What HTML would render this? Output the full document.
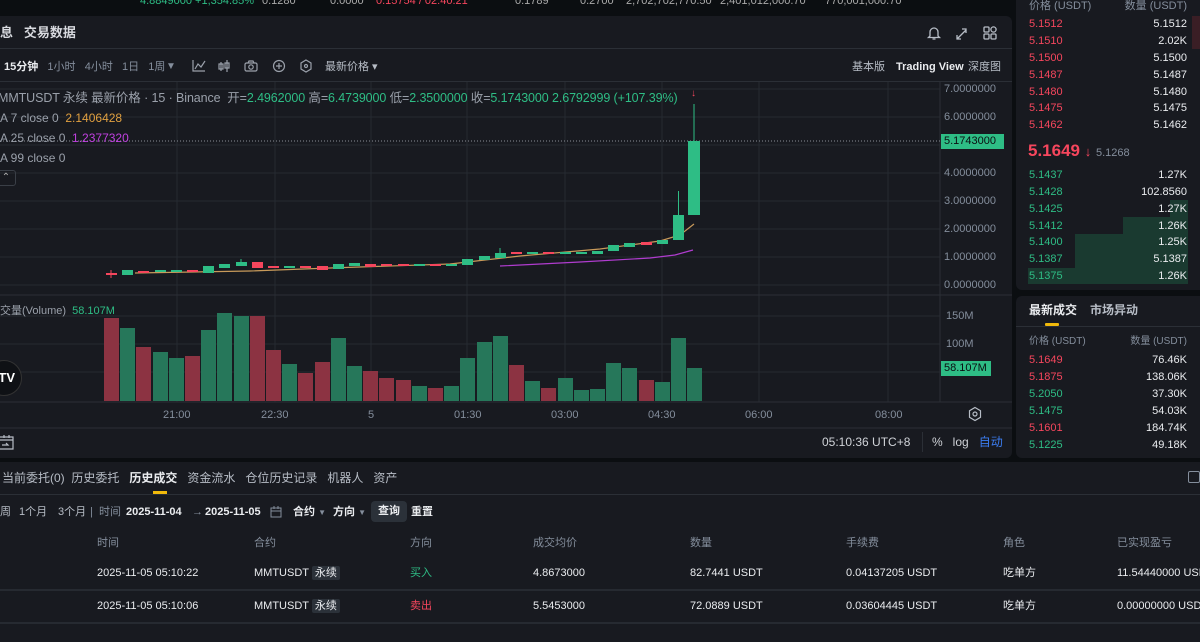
<!DOCTYPE html>
<html><head><meta charset="utf-8"><style>
*{margin:0;padding:0;box-sizing:border-box}
body{width:1200px;height:629px;overflow:hidden;background:#0b0e11;font-family:"Liberation Sans","Noto Sans CJK SC",sans-serif;color:#eaecef;position:relative}
.a{position:absolute;white-space:nowrap;line-height:14px}
.g{color:#2ebd85}.r{color:#f6465d}.m{color:#848e9c}.w{color:#eaecef}
.panel{position:absolute;background:#181a20;border-radius:6px}
.ob div{position:absolute;font-size:11px;line-height:13px}
</style></head><body>
<!-- top bar -->
<div class="a" style="top:-6px;left:140px;font-size:11px;color:#2ebd85">4.8849000 +1,354.85%</div>
<div class="a" style="top:-6px;left:262px;font-size:11px;color:#aaa">0.1280</div>
<div class="a" style="top:-6px;left:330px;font-size:11px;color:#aaa">0.0000</div>
<div class="a r" style="top:-6px;left:376px;font-size:11px">0.15754 / 02:40:21</div>
<div class="a" style="top:-6px;left:515px;font-size:11px;color:#aaa">0.1789</div>
<div class="a" style="top:-6px;left:580px;font-size:11px;color:#aaa">0.2700</div>
<div class="a" style="top:-6px;left:626px;font-size:11px;color:#aaa">2,702,702,770.50</div>
<div class="a" style="top:-6px;left:720px;font-size:11px;color:#aaa">2,401,012,000.70</div>
<div class="a" style="top:-6px;left:825px;font-size:11px;color:#aaa">770,001,000.70</div>

<!-- chart panel -->
<div class="panel" style="left:-6px;top:16px;width:1018px;height:442px;background:#181a20"></div>
<div class="a" style="left:0;top:26px;font-size:13px;font-weight:bold;color:#d8dadf">息&nbsp;&nbsp;&nbsp;交易数据</div>
<svg class="a" style="left:925px;top:24px" width="75" height="18" viewBox="0 0 75 18" fill="none" stroke="#b7bdc6" stroke-width="1.3">
<path d="M5 12V8a4 4 0 0 1 8 0v4l1.5 1.5h-11z M7.5 15h3"/>
<path d="M32 15l9-9 M37 5h4v4 M32 11v4h4"/>
<rect x="59" y="3" width="5" height="5" rx="1"/><rect x="59" y="10" width="5" height="5" rx="1"/><rect x="66" y="10" width="5" height="5" rx="1"/><circle cx="68.5" cy="5.5" r="2.6"/>
</svg>
<div class="a" style="left:0;top:48px;width:1012px;height:1px;background:#2b2f36"></div>
<div class="a" style="left:4px;top:60px;font-size:11px;color:#848e9c"><b style="color:#eaecef">15分钟</b>&nbsp;&nbsp;&nbsp;1小时&nbsp;&nbsp;&nbsp;4小时&nbsp;&nbsp;&nbsp;1日&nbsp;&nbsp;&nbsp;1周</div>
<div class="a m" style="left:166px;top:60px;font-size:10px">▼</div>
<svg class="a" style="left:190px;top:58px" width="125" height="16" fill="none" stroke="#9aa0aa" stroke-width="1.2">
<path d="M3 2v11h12 M5 11l3-5 3 3 4-6"/>
<path d="M31 4v9 M29 6h4v5h-4z M37 2v12 M35 5h4v5h-4z"/>
<rect x="55" y="5" width="12" height="8" rx="1.5"/><circle cx="61" cy="9" r="2.2"/><path d="M58 5l1-2h4l1 2"/>
<circle cx="89" cy="8" r="5.5"/><path d="M89 5v6 M86 8h6"/>
<path d="M116 2l5 3v6l-5 3-5-3V5z"/><circle cx="116" cy="8" r="1.5"/>
</svg>
<div class="a" style="left:325px;top:60px;font-size:11px;color:#b7bdc6">最新价格 ▾</div>
<div class="a" style="left:852px;top:60px;font-size:11px;color:#b7bdc6">基本版</div>
<div class="a" style="left:896px;top:60px;font-size:11px;font-weight:bold;color:#eaecef">Trading View</div>
<div class="a" style="left:968px;top:60px;font-size:11px;color:#b7bdc6">深度图</div>
<div class="a" style="left:0;top:81px;width:1012px;height:1px;background:#2b2f36"></div>

<svg class="a" style="left:0;top:0" width="1012" height="460">
<g stroke="#262a31" stroke-width="1">
<path d="M0 89H940M0 117H940M0 145H940M0 173H940M0 201H940M0 229H940M0 257H940M0 285H940M0 316H940M0 344H940M0 372H940"/>
<path d="M177 82V402M275 82V402M371 82V402M467 82V402M565 82V402M662 82V402M759 82V402M888 82V402"/>
</g>
<path d="M0 295H1012M940 82V402M0 402H1012M0 428H1012" stroke="#2b2f36"/>
<path d="M0 141H940" stroke="#8a8f96" stroke-dasharray="1 2"/>
<g>
<rect x="104" y="318" width="15" height="83" fill="#8c3342"/>
<rect x="120" y="328" width="15" height="73" fill="#26775a"/>
<rect x="136" y="347" width="15" height="54" fill="#8c3342"/>
<rect x="153" y="352" width="15" height="49" fill="#26775a"/>
<rect x="169" y="358" width="15" height="43" fill="#26775a"/>
<rect x="185" y="356" width="15" height="45" fill="#8c3342"/>
<rect x="201" y="330" width="15" height="71" fill="#26775a"/>
<rect x="217" y="313" width="15" height="88" fill="#26775a"/>
<rect x="234" y="316" width="15" height="85" fill="#26775a"/>
<rect x="250" y="316" width="15" height="85" fill="#8c3342"/>
<rect x="266" y="350" width="15" height="51" fill="#8c3342"/>
<rect x="282" y="364" width="15" height="37" fill="#26775a"/>
<rect x="298" y="373" width="15" height="28" fill="#8c3342"/>
<rect x="315" y="362" width="15" height="39" fill="#8c3342"/>
<rect x="331" y="338" width="15" height="63" fill="#26775a"/>
<rect x="347" y="366" width="15" height="35" fill="#26775a"/>
<rect x="363" y="371" width="15" height="30" fill="#8c3342"/>
<rect x="379" y="378" width="15" height="23" fill="#8c3342"/>
<rect x="396" y="380" width="15" height="21" fill="#8c3342"/>
<rect x="412" y="386" width="15" height="15" fill="#26775a"/>
<rect x="428" y="388" width="15" height="13" fill="#8c3342"/>
<rect x="444" y="386" width="15" height="15" fill="#26775a"/>
<rect x="460" y="358" width="15" height="43" fill="#26775a"/>
<rect x="477" y="342" width="15" height="59" fill="#26775a"/>
<rect x="493" y="336" width="15" height="65" fill="#26775a"/>
<rect x="509" y="365" width="15" height="36" fill="#8c3342"/>
<rect x="525" y="381" width="15" height="20" fill="#26775a"/>
<rect x="541" y="388" width="15" height="13" fill="#8c3342"/>
<rect x="558" y="378" width="15" height="23" fill="#26775a"/>
<rect x="574" y="390" width="15" height="11" fill="#26775a"/>
<rect x="590" y="389" width="15" height="12" fill="#26775a"/>
<rect x="606" y="363" width="15" height="38" fill="#26775a"/>
<rect x="622" y="368" width="15" height="33" fill="#26775a"/>
<rect x="639" y="380" width="15" height="21" fill="#8c3342"/>
<rect x="655" y="382" width="15" height="19" fill="#26775a"/>
<rect x="671" y="338" width="15" height="63" fill="#26775a"/>
<rect x="687" y="368" width="15" height="33" fill="#26775a"/>
</g>
<path d="M135 273 L250 271 L330 268 L450 264 L520 256 L600 249 L660 241 L680 235 L694 224" stroke="#c89a5a" stroke-width="1.2" fill="none"/>
<path d="M500 266 L580 262 L650 258 L675 255 L693 250" stroke="#b03ccf" stroke-width="1.2" fill="none"/>
<g>
<rect x="106" y="273" width="11" height="2" fill="#f6465d"/><path d="M111 270V278" stroke="#f6465d"/>
<rect x="122" y="270" width="11" height="5" fill="#2ebd85"/>
<rect x="138" y="271" width="11" height="2" fill="#f6465d"/>
<rect x="155" y="270" width="11" height="2" fill="#2ebd85"/>
<rect x="171" y="270" width="11" height="2" fill="#2ebd85"/>
<rect x="187" y="270" width="11" height="2" fill="#f6465d"/>
<rect x="203" y="266" width="11" height="7" fill="#2ebd85"/>
<rect x="219" y="264" width="11" height="4" fill="#2ebd85"/>
<rect x="236" y="262" width="11" height="4" fill="#2ebd85"/><path d="M241 259V266" stroke="#2ebd85"/>
<rect x="252" y="262" width="11" height="6" fill="#f6465d"/>
<rect x="268" y="266" width="11" height="2" fill="#f6465d"/>
<rect x="284" y="266" width="11" height="2" fill="#2ebd85"/>
<rect x="300" y="266" width="11" height="2" fill="#f6465d"/>
<rect x="317" y="266" width="11" height="4" fill="#f6465d"/>
<rect x="333" y="264" width="11" height="5" fill="#2ebd85"/>
<rect x="349" y="263" width="11" height="3" fill="#2ebd85"/>
<rect x="365" y="264" width="11" height="3" fill="#f6465d"/>
<rect x="381" y="264" width="11" height="2" fill="#f6465d"/>
<rect x="398" y="264" width="11" height="2" fill="#f6465d"/>
<rect x="414" y="264" width="11" height="2" fill="#2ebd85"/>
<rect x="430" y="264" width="11" height="2" fill="#f6465d"/>
<rect x="446" y="264" width="11" height="2" fill="#2ebd85"/>
<rect x="462" y="259" width="11" height="6" fill="#2ebd85"/>
<rect x="479" y="256" width="11" height="4" fill="#2ebd85"/>
<rect x="495" y="253" width="11" height="5" fill="#2ebd85"/><path d="M500 248V258" stroke="#2ebd85"/>
<rect x="511" y="252" width="11" height="2" fill="#f6465d"/>
<rect x="527" y="252" width="11" height="2" fill="#2ebd85"/>
<rect x="543" y="252" width="11" height="2" fill="#f6465d"/>
<rect x="560" y="252" width="11" height="2" fill="#2ebd85"/>
<rect x="576" y="252" width="11" height="2" fill="#2ebd85"/>
<rect x="592" y="251" width="11" height="3" fill="#2ebd85"/>
<rect x="608" y="245" width="11" height="6" fill="#2ebd85"/>
<rect x="624" y="243" width="11" height="4" fill="#2ebd85"/>
<rect x="641" y="242" width="11" height="3" fill="#f6465d"/>
<rect x="657" y="240" width="11" height="4" fill="#2ebd85"/>
<rect x="673" y="215" width="11" height="25" fill="#2ebd85"/><path d="M678.5 191V215" stroke="#2ebd85"/>
<rect x="688" y="141" width="12" height="74" fill="#2ebd85"/><path d="M694 104V141" stroke="#2ebd85"/>
</g>
<text x="691" y="96" fill="#f6465d" font-size="10" font-family="Liberation Sans">↓</text>
</svg>
<div class="a m" style="left:944px;top:83px;font-size:11px;line-height:12px">7.0000000</div>
<div class="a m" style="left:944px;top:111px;font-size:11px;line-height:12px">6.0000000</div>
<div class="a" style="left:941px;top:134px;width:63px;height:15px;background:#2ebd85;color:#0b0e11;font-size:11px;line-height:15px;padding-left:3px">5.1743000</div>
<div class="a m" style="left:944px;top:167px;font-size:11px;line-height:12px">4.0000000</div>
<div class="a m" style="left:944px;top:195px;font-size:11px;line-height:12px">3.0000000</div>
<div class="a m" style="left:944px;top:223px;font-size:11px;line-height:12px">2.0000000</div>
<div class="a m" style="left:944px;top:251px;font-size:11px;line-height:12px">1.0000000</div>
<div class="a m" style="left:944px;top:279px;font-size:11px;line-height:12px">0.0000000</div>
<div class="a m" style="left:946px;top:310px;font-size:11px;line-height:12px">150M</div>
<div class="a m" style="left:946px;top:338px;font-size:11px;line-height:12px">100M</div>
<div class="a" style="left:941px;top:361px;width:50px;height:15px;background:#2ebd85;color:#0b0e11;font-size:11px;line-height:15px;padding-left:3px">58.107M</div>
<div class="a" style="left:-2px;top:91px;font-size:12.5px;letter-spacing:-0.1px;color:#9aa0aa">MMTUSDT 永续 最新价格 · 15 · Binance&nbsp;&nbsp;开=<span class="g">2.4962000</span> 高=<span class="g">6.4739000</span> 低=<span class="g">2.3500000</span> 收=<span class="g">5.1743000</span> <span class="g">2.6792999 (+107.39%)</span></div>
<div class="a" style="left:0;top:111px;font-size:12px;color:#9aa0aa">A 7 close 0&nbsp;&nbsp;<span style="color:#e0a040">2.1406428</span></div>
<div class="a" style="left:0;top:131px;font-size:12px;color:#9aa0aa">A 25 close 0&nbsp;&nbsp;<span style="color:#c040e0">1.2377320</span></div>
<div class="a" style="left:0;top:151px;font-size:12px;color:#9aa0aa">A 99 close 0</div>
<div class="a" style="left:-4px;top:170px;width:20px;height:16px;border:1px solid #3a3f47;border-radius:3px;font-size:10px;color:#aaa;text-align:center;line-height:14px">⌃</div>
<div class="a" style="left:0;top:304px;font-size:11px;color:#9aa0aa">交量(Volume)&nbsp;&nbsp;<span class="g">58.107M</span></div>
<div class="a" style="left:-14px;top:360px;width:36px;height:36px;border-radius:50%;background:#0f1115;border:1px solid #333;font-size:13px;font-weight:bold;color:#fff;line-height:34px;text-align:right;padding-right:6px">TV</div>
<div class="a m" style="left:163px;top:408px;font-size:11px">21:00</div>
<div class="a m" style="left:261px;top:408px;font-size:11px">22:30</div>
<div class="a m" style="left:368px;top:408px;font-size:11px">5</div>
<div class="a m" style="left:454px;top:408px;font-size:11px">01:30</div>
<div class="a m" style="left:551px;top:408px;font-size:11px">03:00</div>
<div class="a m" style="left:648px;top:408px;font-size:11px">04:30</div>
<div class="a m" style="left:745px;top:408px;font-size:11px">06:00</div>
<div class="a m" style="left:875px;top:408px;font-size:11px">08:00</div>
<svg class="a" style="left:967px;top:406px" width="16" height="16" fill="none" stroke="#b7bdc6" stroke-width="1.2"><path d="M8 1.5l5.5 3.2v6.6L8 14.5l-5.5-3.2V4.7z"/><circle cx="8" cy="8" r="2"/></svg>
<svg class="a" style="left:0;top:434px" width="14" height="16" fill="none" stroke="#b7bdc6" stroke-width="1.2"><path d="M0 3h13v12H0 M0 6h13 M4 1v3 M9 1v3 M2 11h6l-2-2"/></svg>
<div class="a" style="left:822px;top:435px;font-size:12px;color:#d0d3d8">05:10:36 UTC+8</div>
<div class="a" style="left:922px;top:432px;width:1px;height:20px;background:#2b2f36"></div>
<div class="a" style="left:932px;top:435px;font-size:12px;color:#d0d3d8">%&nbsp;&nbsp;&nbsp;log&nbsp;&nbsp;&nbsp;<span style="color:#3b7cf0">自动</span></div>

<!-- order book -->
<div class="panel" style="left:1016px;top:-8px;width:190px;height:298px"></div>
<div class="ob">
<div class="m" style="left:1029px;top:0px">价格 (USDT)</div><div class="m" style="right:13px;top:0px">数量 (USDT)</div>
<div style="left:1192px;top:16px;width:8px;height:33px;background:#3a1e25"></div>
<div class="r" style="left:1029px;top:18px">5.1512</div><div style="right:13px;top:18px">5.1512</div>
<div class="r" style="left:1029px;top:35px">5.1510</div><div style="right:13px;top:35px">2.02K</div>
<div class="r" style="left:1029px;top:52px">5.1500</div><div style="right:13px;top:52px">5.1500</div>
<div class="r" style="left:1029px;top:69px">5.1487</div><div style="right:13px;top:69px">5.1487</div>
<div class="r" style="left:1029px;top:86px">5.1480</div><div style="right:13px;top:86px">5.1480</div>
<div class="r" style="left:1029px;top:102px">5.1475</div><div style="right:13px;top:102px">5.1475</div>
<div class="r" style="left:1029px;top:119px">5.1462</div><div style="right:13px;top:119px">5.1462</div>
<div class="r" style="left:1028px;top:141px;font-size:17px;line-height:20px;font-weight:bold">5.1649 <span style="font-size:13px;font-weight:normal">↓</span> <span class="m" style="font-size:11px;font-weight:normal">5.1268</span></div>
<div style="left:1170px;top:200px;width:18px;height:76px;background:#1a3a30"></div>
<div style="left:1123px;top:217px;width:65px;height:59px;background:#1a3a30"></div>
<div style="left:1075px;top:234px;width:113px;height:42px;background:#1a3a30"></div>
<div style="left:1028px;top:268px;width:160px;height:16px;background:#1a3a30"></div>
<div class="g" style="left:1029px;top:169px">5.1437</div><div style="right:13px;top:169px">1.27K</div>
<div class="g" style="left:1029px;top:186px">5.1428</div><div style="right:13px;top:186px">102.8560</div>
<div class="g" style="left:1029px;top:203px">5.1425</div><div style="right:13px;top:203px">1.27K</div>
<div class="g" style="left:1029px;top:220px">5.1412</div><div style="right:13px;top:220px">1.26K</div>
<div class="g" style="left:1029px;top:236px">5.1400</div><div style="right:13px;top:236px">1.25K</div>
<div class="g" style="left:1029px;top:253px">5.1387</div><div style="right:13px;top:253px">5.1387</div>
<div class="g" style="left:1029px;top:270px">5.1375</div><div style="right:13px;top:270px">1.26K</div>
</div>
<!-- trades -->
<div class="panel" style="left:1016px;top:296px;width:190px;height:162px"></div>
<div class="ob">
<div style="left:1029px;top:303px;font-size:12px;line-height:14px;font-weight:bold">最新成交</div>
<div style="left:1090px;top:303px;font-size:12px;line-height:14px;font-weight:bold;color:#b7bdc6">市场异动</div>
<div style="left:1045px;top:323px;width:14px;height:3px;background:#f0b90b;border-radius:1px"></div>
<div style="left:1016px;top:326px;width:184px;height:1px;background:#2b2f36"></div>
<div class="m" style="left:1029px;top:335px;font-size:10px">价格 (USDT)</div><div class="m" style="right:13px;top:335px;font-size:10px">数量 (USDT)</div>
<div class="r" style="left:1029px;top:354px">5.1649</div><div style="right:13px;top:354px">76.46K</div>
<div class="r" style="left:1029px;top:371px">5.1875</div><div style="right:13px;top:371px">138.06K</div>
<div class="g" style="left:1029px;top:388px">5.2050</div><div style="right:13px;top:388px">37.30K</div>
<div class="g" style="left:1029px;top:405px">5.1475</div><div style="right:13px;top:405px">54.03K</div>
<div class="r" style="left:1029px;top:422px">5.1601</div><div style="right:13px;top:422px">184.74K</div>
<div class="g" style="left:1029px;top:439px">5.1225</div><div style="right:13px;top:439px">49.18K</div>
</div>

<!-- bottom panel -->
<div class="panel" style="left:-6px;top:462px;width:1212px;height:180px"></div>
<div class="a" style="left:2px;top:471px;font-size:12px;color:#b7bdc6">当前委托(0)&nbsp;&nbsp;历史委托&nbsp;&nbsp;&nbsp;<b style="color:#eaecef">历史成交</b>&nbsp;&nbsp;&nbsp;资金流水&nbsp;&nbsp;&nbsp;仓位历史记录&nbsp;&nbsp;&nbsp;机器人&nbsp;&nbsp;&nbsp;资产</div>
<div class="a" style="left:153px;top:491px;width:14px;height:3px;background:#f0b90b"></div>
<div class="a" style="left:1188px;top:471px;width:12px;height:12px;border:1px solid #848e9c;border-radius:2px"></div>
<div class="a" style="left:0;top:494px;width:1200px;height:1px;background:#2b2f36"></div>
<div class="a" style="left:0;top:505px;font-size:11px;color:#b7bdc6">周</div>
<div class="a" style="left:19px;top:505px;font-size:11px;color:#b7bdc6">1个月</div>
<div class="a" style="left:58px;top:505px;font-size:11px;color:#b7bdc6">3个月</div>
<div class="a m" style="left:90px;top:505px;font-size:11px">|&nbsp;&nbsp;时间</div>
<div class="a" style="left:126px;top:505px;font-size:11px;font-weight:bold">2025-11-04</div>
<div class="a m" style="left:192px;top:505px;font-size:11px">→</div>
<div class="a" style="left:205px;top:505px;font-size:11px;font-weight:bold">2025-11-05</div>
<svg class="a" style="left:270px;top:505px" width="12" height="13" fill="none" stroke="#848e9c"><path d="M1 3h10v9H1z M1 6h10 M4 1v3 M8 1v3"/></svg>
<div class="a" style="left:293px;top:505px;font-size:11px;font-weight:bold">合约 <span class="m" style="font-size:8px">▼</span></div>
<div class="a" style="left:333px;top:505px;font-size:11px;font-weight:bold">方向 <span class="m" style="font-size:8px">▼</span></div>
<div class="a" style="left:371px;top:501px;width:36px;height:21px;background:#2b3139;border-radius:4px;font-size:11px;font-weight:bold;text-align:center;line-height:21px">查询</div>
<div class="a" style="left:411px;top:505px;font-size:11px;font-weight:bold">重置</div>
<div class="a m" style="left:97px;top:536px;font-size:11px">时间</div>
<div class="a m" style="left:254px;top:536px;font-size:11px">合约</div>
<div class="a m" style="left:410px;top:536px;font-size:11px">方向</div>
<div class="a m" style="left:533px;top:536px;font-size:11px">成交均价</div>
<div class="a m" style="left:690px;top:536px;font-size:11px">数量</div>
<div class="a m" style="left:846px;top:536px;font-size:11px">手续费</div>
<div class="a m" style="left:1003px;top:536px;font-size:11px">角色</div>
<div class="a m" style="left:1117px;top:536px;font-size:11px">已实现盈亏</div>
<div class="a" style="left:97px;top:566px;font-size:11px">2025-11-05 05:10:22</div>
<div class="a" style="left:254px;top:566px;font-size:11px">MMTUSDT <span style="background:#2b3139;padding:1px 3px;border-radius:2px">永续</span></div>
<div class="a g" style="left:410px;top:566px;font-size:11px">买入</div>
<div class="a" style="left:533px;top:566px;font-size:11px">4.8673000</div>
<div class="a" style="left:690px;top:566px;font-size:11px">82.7441 USDT</div>
<div class="a" style="left:846px;top:566px;font-size:11px">0.04137205 USDT</div>
<div class="a" style="left:1003px;top:566px;font-size:11px">吃单方</div>
<div class="a" style="left:1117px;top:566px;font-size:11px">11.54440000 USDT</div>
<div class="a" style="left:0;top:589px;width:1200px;height:2px;background:#262a31"></div>
<div class="a" style="left:97px;top:599px;font-size:11px">2025-11-05 05:10:06</div>
<div class="a" style="left:254px;top:599px;font-size:11px">MMTUSDT <span style="background:#2b3139;padding:1px 3px;border-radius:2px">永续</span></div>
<div class="a r" style="left:410px;top:599px;font-size:11px">卖出</div>
<div class="a" style="left:533px;top:599px;font-size:11px">5.5453000</div>
<div class="a" style="left:690px;top:599px;font-size:11px">72.0889 USDT</div>
<div class="a" style="left:846px;top:599px;font-size:11px">0.03604445 USDT</div>
<div class="a" style="left:1003px;top:599px;font-size:11px">吃单方</div>
<div class="a" style="left:1117px;top:599px;font-size:11px">0.00000000 USDT</div>
<div class="a" style="left:0;top:622px;width:1200px;height:2px;background:#262a31"></div>
</body></html>
